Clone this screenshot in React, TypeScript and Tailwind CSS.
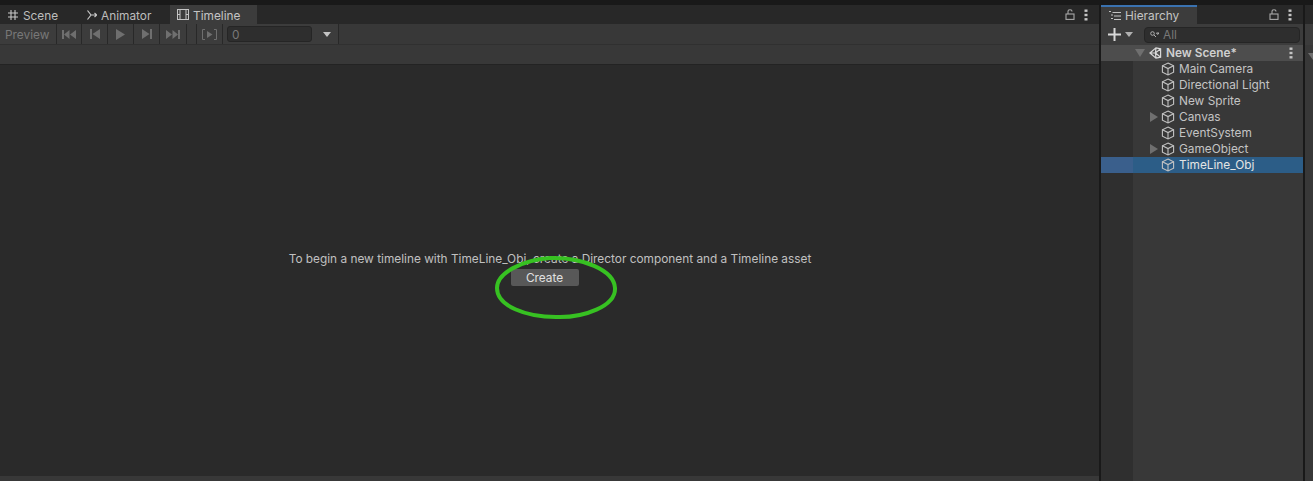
import React from "react";

function CubeIcon() {
    return (
        <svg width="14" height="14" viewBox="0 0 14 14" fill="none" stroke="#c4c4c4" strokeWidth="1.1" className="shrink-0">
            <path d="M7 1 L12.6 3.8 V10.2 L7 13 L1.4 10.2 V3.8 Z" />
            <path d="M1.4 3.8 L7 6.6 L12.6 3.8 M7 6.6 V13" />
        </svg>
    );
}

function Arrow() {
    return (
        <svg width="8" height="10" viewBox="0 0 8 10" className="shrink-0">
            <path d="M0 0 L8 5 L0 10 Z" fill="#6f6f6f" />
        </svg>
    );
}

function Dots() {
    return (
        <svg width="4" height="12" viewBox="0 0 4 12" fill="#c4c4c4">
            <rect x="0.5" y="0.5" width="3" height="2.4" />
            <rect x="0.5" y="4.8" width="3" height="2.4" />
            <rect x="0.5" y="9.1" width="3" height="2.4" />
        </svg>
    );
}

function Lock() {
    return (
        <svg width="10" height="11" viewBox="0 0 10 11" fill="none" stroke="#a8a8a8" strokeWidth="1.1">
            <rect x="1" y="5" width="8" height="5.4" />
            <path d="M3 5 V2.6 Q3 0.7 5 0.7 Q7 0.7 7 2.6" />
        </svg>
    );
}

function ToolButton({ width, children }: { width: string; children?: React.ReactNode }) {
    return <div className={`flex items-center justify-center h-full border-r border-[#282828] ${width}`}>{children}</div>;
}

function Row({ name, arrow, selected }: { name: string; arrow?: boolean; selected?: boolean }) {
    return (
        <div className={`flex h-4 items-center ${selected ? "bg-[#2c5d87] text-[#e4e4e4]" : "text-[#c4c4c4]"}`}>
            <div className={`w-8 h-full shrink-0 ${selected ? "bg-[#3a5f8c]" : "bg-[#2f2f2f]"}`} />
            <div className="w-[11px] ml-[17px] shrink-0 flex">{arrow && <Arrow />}</div>
            <CubeIcon />
            <span className="ml-[4px]">{name}</span>
        </div>
    );
}

const fill = "#6f6f6f";

export default function App() {
    return (
        <div className="relative flex flex-col h-[481px] w-[1313px] overflow-hidden bg-[#191919] pt-[5px] text-[11.85px] leading-4" style={{ fontFamily: "Inter, 'Liberation Sans', sans-serif" }}>
            <div className="flex flex-1 min-h-0 gap-[2px]">
                {/* timeline panel */}
                <section className="flex flex-col w-[1099px] bg-[#282828]">
                    <div className="flex h-[19px] items-stretch text-[#bdbdbd]">
                        <div className="flex items-center w-[83px] pl-[8px] pt-[2px] gap-[5px]">
                            <svg width="10" height="10" viewBox="0 0 10 10" stroke="#c8c8c8" strokeWidth="1.1" fill="none" className="-mt-[2px]">
                                <path d="M3 0 V10 M7 0 V10 M0 3 H10 M0 7 H10" />
                            </svg>
                            Scene
                        </div>
                        <div className="flex items-center w-[87px] pl-[4px] pt-[2px] gap-[4px]">
                            <svg width="10" height="10" viewBox="0 0 10 10" stroke="#c8c8c8" strokeWidth="1.2" fill="none" className="-mt-[2px]">
                                <path d="M0.5 0.5 L4 5 L0.5 9.5 M4 5 H9.5 M7.5 3 L9.8 5 L7.5 7" />
                            </svg>
                            Animator
                        </div>
                        <div className="flex items-center w-[87px] pl-[7px] pt-[2px] gap-[4px] bg-[#3c3c3c] text-[#c4c4c4]">
                            <svg width="12" height="11" viewBox="0 0 12 11" stroke="#c4c4c4" strokeWidth="1" fill="none" className="-mt-[2px]">
                                <rect x="0.5" y="0.5" width="11" height="10" />
                                <path d="M3 0.5 V10.5 M9 0.5 V10.5 M0.5 5.5 H3 M9 5.5 H11.5" />
                            </svg>
                            Timeline
                        </div>
                        <div className="flex flex-1 items-center justify-end gap-[9px] pr-[11px]">
                            <Lock />
                            <Dots />
                        </div>
                    </div>
                    <div className="flex h-[21px] items-center bg-[#3c3c3c] border-b border-[#303030]">
                        <div className="flex h-full items-center w-[57px] pl-[5px] pt-[2px] text-[#787878] border-r border-[#282828]">Preview</div>
                        <ToolButton width="w-[25px]">
                            <svg width="14" height="9" viewBox="0 0 14 9" fill={fill}>
                                <path d="M0 0 H2 V9 H0 Z M2 4.5 L7.5 0 V9 Z M8 4.5 L14 0 V9 Z" />
                            </svg>
                        </ToolButton>
                        <ToolButton width="w-[26px]">
                            <svg width="10" height="10" viewBox="0 0 10 10" fill={fill}>
                                <path d="M0 0 H2 V10 H0 Z M2.5 5 L10 0 V10 Z" />
                            </svg>
                        </ToolButton>
                        <ToolButton width="w-[26px]">
                            <svg width="9" height="11" viewBox="0 0 9 11" fill={fill}>
                                <path d="M0 0 L9 5.5 L0 11 Z" />
                            </svg>
                        </ToolButton>
                        <ToolButton width="w-[26px]">
                            <svg width="10" height="10" viewBox="0 0 10 10" fill={fill}>
                                <path d="M0 0 L7.5 5 L0 10 Z M8 0 H10 V10 H8 Z" />
                            </svg>
                        </ToolButton>
                        <ToolButton width="w-[27px]">
                            <svg width="14" height="9" viewBox="0 0 14 9" fill={fill}>
                                <path d="M0 0 L6 4.5 L0 9 Z M6.5 0 L12 4.5 L6.5 9 Z M12 0 H14 V9 H12 Z" />
                            </svg>
                        </ToolButton>
                        <ToolButton width="w-[10px]" />
                        <ToolButton width="w-[26px]">
                            <svg width="15" height="11" viewBox="0 0 15 11" fill="none" stroke={fill}>
                                <path d="M3 0.5 H0.5 V10.5 H3 M12 0.5 H14.5 V10.5 H12" />
                                <path d="M5 2 L10.5 5.5 L5 9 Z" fill={fill} stroke="none" />
                            </svg>
                        </ToolButton>
                        <div className="flex items-center h-[16px] w-[85px] ml-[4px] pl-[4px] pt-[1px] rounded-[3px] bg-[#2e2e2e] border border-[#252525] text-[#787878]">0</div>
                        <div className="flex items-center justify-center h-full w-[23px] ml-[4px] border-r border-[#282828]">
                            <svg width="8" height="5" viewBox="0 0 8 5" fill="#c4c4c4">
                                <path d="M0 0 H8 L4 5 Z" />
                            </svg>
                        </div>
                        <div className="flex-1 h-full bg-[#383838]" />
                    </div>
                    <div className="h-[20px] bg-[#383838] border-b border-[#232323]" />
                    <main className="flex flex-1 flex-col items-center bg-[#2a2a2a] pt-[186px] text-[#c0c0c0]">
                        <p className="h-[16px] ml-[1px]">To begin a new timeline with TimeLine_Obj, create a Director component and a Timeline asset</p>
                        <button className="mt-[2px] h-[17px] w-[68px] -translate-x-[5px] rounded-[2px] bg-[#585858] text-[#e0e0e0]">Create</button>
                    </main>
                    <div className="h-[5px] bg-[#383838]" />
                </section>

                {/* hierarchy panel */}
                <section className="flex flex-col w-[202px] bg-[#282828]">
                    <div className="flex h-[19px] items-stretch text-[#c4c4c4]">
                        <div className="flex items-center w-[96px] pl-[8px] gap-[4px] bg-[#3c3c3c] border-t-2 border-[#3a72b0]">
                            <svg width="12" height="10" viewBox="0 0 12 10" stroke="#c4c4c4" strokeWidth="1" fill="none">
                                <path d="M3.5 1.5 H12 M5 5 H12 M5 8.5 H12 M0 0.5 H2 M2 4 H4 M2 7.5 H4" />
                            </svg>
                            Hierarchy
                        </div>
                        <div className="flex flex-1 items-center justify-end gap-[9px] pr-[11px]">
                            <Lock />
                            <Dots />
                        </div>
                    </div>
                    <div className="flex h-[21px] items-center bg-[#3c3c3c]">
                        <svg width="13" height="13" viewBox="0 0 13 13" fill="#d8d8d8" className="ml-[7px]">
                            <path d="M5.5 0 H7.5 V5.5 H13 V7.5 H7.5 V13 H5.5 V7.5 H0 V5.5 H5.5 Z" />
                        </svg>
                        <svg width="8" height="5" viewBox="0 0 8 5" fill="#b0b0b0" className="ml-[4px]">
                            <path d="M0 0 H8 L4 5 Z" />
                        </svg>
                        <div className="flex items-center h-[16px] w-[156px] ml-[11px] pl-[5px] gap-[4px] rounded-[4px] bg-[#2e2e2e] border border-[#252525] text-[#787878]">
                            <svg width="9" height="7" viewBox="0 0 9 7" fill="none" stroke="#b0b0b0">
                                <circle cx="2.5" cy="2.5" r="1.8" />
                                <path d="M4 4 L6 6 M6.5 2 H9 L7.7 3.5 Z" />
                            </svg>
                            All
                        </div>
                    </div>
                    <div className="flex h-[16px] items-center bg-[#4d4d4d] text-[#d0d0d0] font-semibold pr-[10px]">
                        <svg width="10" height="8" viewBox="0 0 10 8" fill="#6f6f6f" className="ml-[34px]">
                            <path d="M0 0 H10 L5 8 Z" />
                        </svg>
                        <svg width="13" height="14" viewBox="0 0 14 14" fill="none" stroke="#d8d8d8" strokeWidth="1.3" className="ml-[4px]">
                            <path d="M1 7 L7.5 1.5 L12.5 2.5 L12.5 11.5 L7.5 12.5 Z M7.5 1.5 L7 7 L7.5 12.5 M1 7 H7 L12.5 2.5 M7 7 L12.5 11.5" />
                        </svg>
                        <span className="ml-[4px] flex-1">New Scene*</span>
                        <Dots />
                    </div>
                    <div className="flex flex-1 flex-col bg-[#383838]">
                        <Row name="Main Camera" />
                        <Row name="Directional Light" />
                        <Row name="New Sprite" />
                        <Row name="Canvas" arrow />
                        <Row name="EventSystem" />
                        <Row name="GameObject" arrow />
                        <Row name="TimeLine_Obj" selected />
                        <div className="flex-1 w-8 bg-[#2f2f2f]" />
                    </div>
                </section>

                {/* edge of next panel */}
                <section className="flex flex-col flex-1 bg-[#282828]">
                    <div className="h-[19px]" />
                    <div className="h-[21px] bg-[#3c3c3c]" />
                    <div className="flex-1 bg-[#383838] pt-[8px] pl-[3px]">
                        <svg width="5" height="7" viewBox="0 0 5 7" fill="#6f6f6f">
                            <path d="M0 0 H5 V7 Z" />
                        </svg>
                    </div>
                </section>
            </div>

            {/* hand drawn marker over the page */}
            <svg width="126" height="68" viewBox="0 0 126 68" fill="none" className="absolute left-[494px] top-[254px]">
                <path
                    d="M56 4 C88 3 120 16 121 34 C122 52 90 64 62 63 C32 63 3 52 3 34 C3 19 28 6 56 4 Z"
                    stroke="#37c122"
                    strokeWidth="4"
                />
            </svg>
        </div>
    );
}
